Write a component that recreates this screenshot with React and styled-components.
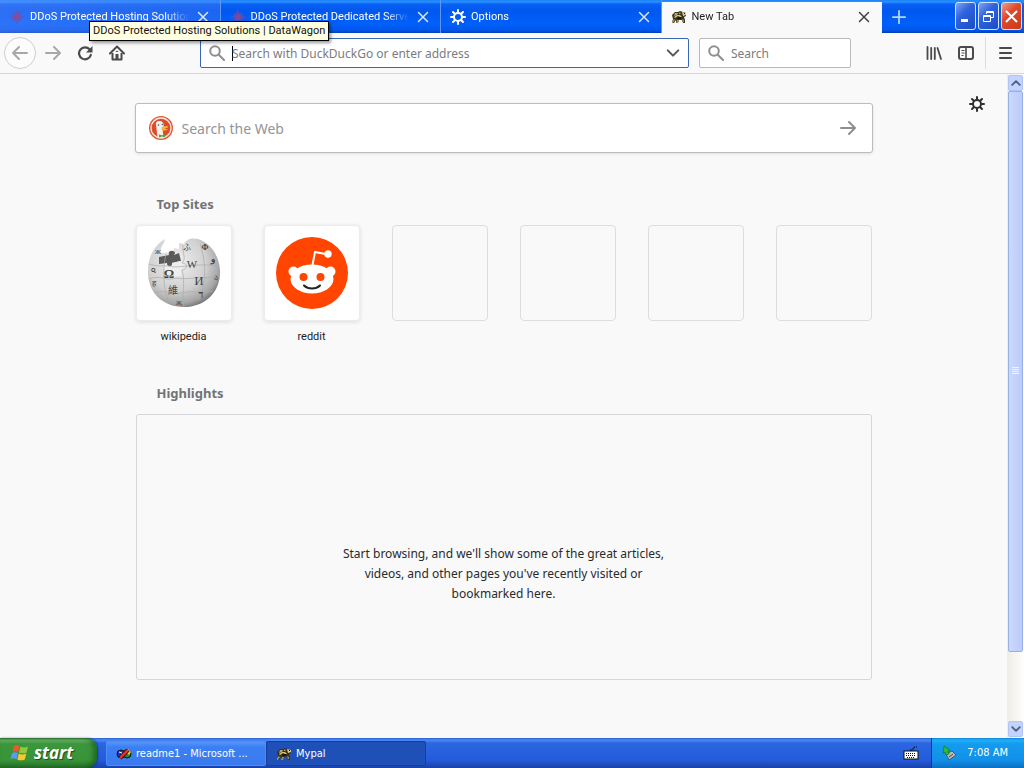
import React from 'react'
import styled, { createGlobalStyle, css } from 'styled-components'

const pageFont = '"Noto Sans", "Open Sans", sans-serif'
const chromeFont = 'Roboto, "Noto Sans", sans-serif'
const taskFont = '"DejaVu Sans Condensed", "Noto Sans", sans-serif'

const GlobalStyle = createGlobalStyle`
  *, *::before, *::after {
    box-sizing: border-box;
  }
  body {
    margin: 0;
    background: #f9f9fa;
    font-family: ${pageFont};
  }
  button, input {
    font: inherit;
    margin: 0;
    padding: 0;
    border: 0;
    background: none;
    color: inherit;
  }
  button {
    cursor: pointer;
  }
  a {
    color: inherit;
    text-decoration: none;
  }
  svg {
    display: block;
    flex: none;
  }
`

/* icons */

const Line = ({ size = 16, width = 2, color = 'currentColor', children }) => (
  <svg width={size} height={size} viewBox="0 0 16 16" fill="none" stroke={color} strokeWidth={width} strokeLinecap="round" strokeLinejoin="round" aria-hidden="true">
    {children}
  </svg>
)

const CloseIcon = () => (
  <Line size={12} width={2}><path d="M2 2l12 12M14 2L2 14" /></Line>
)

const BackIcon = () => <Line width={2}><path d="M15 8H1M7 2L1 8l6 6" /></Line>
const ForwardIcon = () => <Line width={2}><path d="M1 8h14M9 2l6 6-6 6" /></Line>

const ReloadIcon = () => (
  <svg width="16" height="16" viewBox="0 0 16 16" aria-hidden="true">
    <path d="M12.6 4.4A6 6 0 1 0 13.8 10" fill="none" stroke="currentColor" strokeWidth="2.2" strokeLinecap="round" />
    <path d="M15.5 1v6.500H9z" fill="currentColor" />
  </svg>
)

const HomeIcon = () => (
  <svg width="16" height="16" viewBox="0 0 16 16" aria-hidden="true">
    <path d="M1 8.500L8 1.500l7 7" fill="none" stroke="currentColor" strokeWidth="2" strokeLinecap="round" strokeLinejoin="round" />
    <path d="M3.500 8v6.500h9V8" fill="none" stroke="currentColor" strokeWidth="2" strokeLinejoin="round" />
    <path d="M6.500 9h3v6h-3z" fill="currentColor" />
    <path d="M8 5.500l1.500 1.500h-3z" fill="currentColor" />
  </svg>
)

const SearchIcon = () => (
  <Line width={2}><circle cx="6" cy="6" r="4.800" /><path d="M9.800 9.800L15 15" /></Line>
)

const ChevronIcon = () => <Line size={14} width={2.4}><path d="M2 5l6 6 6-6" /></Line>

const PlusIcon = () => <Line size={14} width={2}><path d="M8 1v14M1 8h14" /></Line>

const LibraryIcon = () => (
  <svg width="16" height="16" viewBox="0 0 16 16" fill="none" stroke="currentColor" strokeWidth="1.800" strokeLinecap="round" aria-hidden="true">
    <path d="M1.500 2v12M5.200 3v11M8.800 3v11M11.500 3L15 14" />
  </svg>
)

const SidebarIcon = () => (
  <svg width="16" height="16" viewBox="0 0 16 16" fill="none" stroke="currentColor" aria-hidden="true">
    <rect x="1" y="2" width="14" height="12" rx="2" strokeWidth="2" />
    <path d="M8 2v12" strokeWidth="1.600" />
    <path d="M3.500 5.500h3M3.500 8h3M3.500 10.500h2" />
  </svg>
)

const MenuIcon = () => <Line width={2}><path d="M3 3h11M3 8h11M3 13h11" /></Line>

const GearIcon = () => (
  <svg width="16" height="16" viewBox="0 0 16 16" fill="none" stroke="currentColor" strokeWidth="2" strokeLinecap="round" aria-hidden="true">
    <circle cx="8" cy="8" r="4" />
    <path d="M8 1v2M8 13v2M1 8h2M13 8h2M3 3l1.500 1.500M11.500 11.500L13 13M13 3l-1.500 1.500M4.500 11.500L3 13" />
  </svg>
)

const WagonIcon = () => (
  <svg width="16" height="16" viewBox="0 0 16 16" aria-hidden="true">
    <g fill="#7d4aa8" opacity="0.55">
      <circle cx="8" cy="8" r="5" />
      <path d="M7 1h2v14H7zM1 7h14v2H1z" />
      <path d="M3.500 3.500l9 9M12.500 3.500l-9 9" stroke="#7d4aa8" />
    </g>
    <circle cx="8" cy="8" r="3" fill="#a04878" opacity="0.6" />
  </svg>
)

const MypalIcon = () => (
  <svg width="16" height="16" viewBox="0 0 16 16" aria-hidden="true">
    <path d="M1 6l3-3 3 0 2-1 3 1 3 1v3l-2 1 1 3v3h-2l-1-3-3 0-1 3H5l0-3-2 3H1l1-4z" fill="#3a3422" />
    <path d="M11 3l4 1v2l-3 1z" fill="#d9cda0" />
    <path d="M13 4h1v1h-1z" fill="#111" />
    <path d="M4 4l3 0-1 2-3 1zM8 3.500l2 .5-1 1-1 0z" fill="#b6a668" />
    <path d="M3 8l3-2 3 0 2 2-2 0-2-1-3 2z" fill="#d8c56a" />
    <path d="M1 12l2-2 1 1-2 3H1zM6 11l2 0-1 3H5zM11 10l2 1v2h-1z" fill="#98915c" />
    <path d="M7 8h3v2H6z" fill="#15130e" />
  </svg>
)

const DuckIcon = () => (
  <svg width="24" height="24" viewBox="0 0 24 24" aria-hidden="true">
    <circle cx="12" cy="12" r="12" fill="#de5833" />
    <circle cx="12" cy="12" r="10" fill="#de4a2c" stroke="#f8e8dc" strokeWidth="1.300" />
    <path d="M8.500 21.200L7 9C6.500 6 8 4.800 10.500 5c3 0 4.200 2 4.200 5l-1 4 .8 7.200c-2 .8-4 .8-6 0z" fill="#f3f1e6" />
    <path d="M12.500 11.500c2-1.500 4-1.500 7-1-1 1.500-3 2-4 2.200 1 .5 2.500.5 3.500.8-2 1.500-5.500 1.300-6.500 0z" fill="#fbb72a" />
    <path d="M10 18.500l3 .8 3-1v3l-3-.8-3 1z" fill="#5c9e45" />
    <circle cx="9.500" cy="9" r="0.800" fill="#2d4f8e" />
    <circle cx="13.300" cy="8.500" r="0.700" fill="#2d4f8e" />
  </svg>
)

const WikipediaLogo = () => (
  <svg width="76" height="72" viewBox="0 0 76 72" aria-hidden="true">
    <defs>
      <radialGradient id="globe" cx="0.4" cy="0.35" r="0.68">
        <stop offset="0" stopColor="#f0f0f0" />
        <stop offset="0.6" stopColor="#d0d0d0" />
        <stop offset="0.88" stopColor="#a6a6a6" />
        <stop offset="1" stopColor="#777" />
      </radialGradient>
    </defs>
    <path d="M19 2c-1 5-5 8-4 14l12-1 1-4 5 1 0-6 5 1c3-6 9-6 14-5 13 4 21 17 22 31 1 22-15 37-36 37C15 70 1 54 2 33 2 19 9 8 19 2z" fill="url(#globe)" />
    <path d="M13 20l10-2c-1-3 1-5 4-4s2 2 1 4l5-2 2 8-9 2c2 4-5 6-5 0l-8 1z" fill="#5a5a5a" />
    <path d="M21 26c-2 4 6 5 5 0l8-2 2 2-1 13-16 2-1-13z" fill="#eee" />
    <g fill="none" stroke="#aaa" strokeWidth="0.700">
      <path d="M20 17c-3 13-4 31 3 49M37 8c-1 11 4 12-1 18 7 0 5 7 0 7 4 13-1 25 2 37M54 7c6 17 7 40-2 57" />
      <path d="M3 27c12 4 18 0 24 3 13 0 26-4 45-1M3 42c12-5 17 3 27-1 13 2 25-2 44 0M8 56c10-4 18 2 28 0 11-3 20 1 31-2" />
    </g>
    <g fill="#444" fontFamily="Liberation Serif, Noto Sans CJK SC, serif" textAnchor="middle">
      <text x="23" y="41" fontSize="13" fontWeight="bold">Ω</text>
      <text x="46" y="31" fontSize="11">W</text>
      <text x="53" y="48" fontSize="13">И</text>
      <text x="27" y="57" fontSize="10">維</text>
      <text x="55" y="61" fontSize="10" fontWeight="bold">ד</text>
      <text x="41" y="13" fontSize="8">ふ</text>
      <text x="59" y="13" fontSize="8" fontWeight="bold">Ф</text>
      <text x="67" y="25" fontSize="9" fontWeight="bold">و</text>
      <text x="7" y="36" fontSize="8">વ</text>
      <text x="8" y="49" fontSize="8">ह</text>
      <text x="12" y="17" fontSize="7">Ж</text>
      <text x="70" y="43" fontSize="8">ა</text>
      <text x="33" y="68" fontSize="7">Җ</text>
    </g>
  </svg>
)

const RedditLogo = () => (
  <svg width="72" height="72" viewBox="0 0 72 72" aria-hidden="true">
    <circle cx="36" cy="36" r="36" fill="#ff4500" />
    <path d="M36.500 28L39 15l13 2.500" fill="none" stroke="#fff" strokeWidth="2" strokeLinejoin="round" />
    <circle cx="52" cy="17" r="3.700" fill="#fff" />
    <circle cx="17.500" cy="34.500" r="5" fill="#fff" />
    <circle cx="54.500" cy="34.500" r="5" fill="#fff" />
    <ellipse cx="36" cy="42" rx="21.500" ry="14.500" fill="#fff" />
    <circle cx="27.500" cy="40" r="4" fill="#ff4500" />
    <circle cx="44.500" cy="40" r="4" fill="#ff4500" />
    <path d="M28 48.500c4 4 12 4 16 0" fill="none" stroke="#222" strokeWidth="2" strokeLinecap="round" />
  </svg>
)

const WindowsLogo = () => (
  <svg width="20" height="20" viewBox="0 0 20 20" aria-hidden="true">
    <path d="M4 3c2-1.500 4-1 5.500 0L8 9C6 8 4.500 8 2.500 9z" fill="#ea5a2b" />
    <path d="M10.500 3.500c2 1.300 4.500 1.300 7.500.2L16.500 9.500c-3 1.300-5 1-7.500 0z" fill="#8ecb3c" />
    <path d="M2.200 10c2-1 3.800-1 5.600 0l-1.300 6c-2-1-4-1-6 0z" fill="#5b9cf0" />
    <path d="M8.800 10.500c2.500 1.300 4.700 1.300 7.500 0l-1.500 6c-3 1.300-5 1-7.500 0z" fill="#fbc72e" />
  </svg>
)

const WordpadIcon = () => (
  <svg width="16" height="16" viewBox="0 0 16 16" aria-hidden="true">
    <circle cx="5" cy="8" r="4" fill="#1a37c8" stroke="#111" />
    <circle cx="11" cy="8" r="4" fill="#1c8a3a" stroke="#111" />
    <path d="M9 5l3-2 3 3-2 3z" fill="#f2d22e" />
    <path d="M4 12L12 4" stroke="#111" strokeWidth="4" />
    <path d="M4 12L12 4" stroke="#e8302a" strokeWidth="2.500" />
    <path d="M3 6l3 1" stroke="#fff" />
  </svg>
)

const KeyboardIcon = () => (
  <svg width="16" height="16" viewBox="0 0 16 16" aria-hidden="true">
    <path d="M8 6V4h3V2h3" fill="none" stroke="#111" strokeDasharray="2 1" />
    <rect x="1" y="6" width="14" height="8" fill="#fff" stroke="#111" />
    <path d="M3 8.500h10M3 10.500h10M4 12.500h8" stroke="#111" strokeDasharray="1 1" />
  </svg>
)

const EjectIcon = () => (
  <svg width="16" height="16" viewBox="0 0 16 16" aria-hidden="true">
    <path d="M5 9l6-3 4 4-7 5z" fill="#b9bec4" stroke="#4c5560" />
    <path d="M8 12l4-3" stroke="#444" />
    <path d="M3 1l6 4-2 1 1 3-3 1-1-3-2 1z" fill="#33b83a" stroke="#167a2b" strokeWidth="0.800" />
  </svg>
)

/* title bar */

const Window = styled.div`
  display: flex;
  flex-direction: column;
  min-height: 100vh;
`

const TitleBar = styled.header`
  display: flex;
  height: 33px;
  padding-right: 2px;
  font: 11px/16px ${chromeFont};
  color: #fff;
  background: linear-gradient(#1b86fb 0, #2a90ff 2px, #0a62f4 4px, #0058ee 10px, #0060fa 24px, #0058ec 30px, #003db8 33px);
`

const Tabs = styled.div`
  display: flex;
  flex: 0 1 882px;
  min-width: 0;
`

const Tab = styled.div`
  position: relative;
  display: flex;
  flex: 1 1 0;
  min-width: 0;
  align-items: center;
  gap: 5px;
  padding: 1px 11px 0 9px;
  border-right: 1px solid #5b97f8;

  ${({ $hover }) => $hover && css`
    background: linear-gradient(90deg, rgba(110, 145, 250, 0.4), rgba(90, 130, 245, 0.3));
  `}

  ${({ $active }) => $active && css`
    margin-top: 2px;
    padding-top: 0;
    padding-bottom: 1px;
    border-right-color: #f9f9fa;
    background: #f9f9fa;
    color: #222;
  `}
`

const TabTitle = styled.button`
  flex: 1;
  min-width: 0;
  overflow: hidden;
  white-space: nowrap;
  text-align: left;
  mask-image: linear-gradient(90deg, #000 calc(100% - 24px), transparent);
`

const TabClose = styled.button`
  display: flex;
  margin-left: 3px;
  opacity: 0.85;
`

const Tooltip = styled.div`
  position: absolute;
  z-index: 2;
  top: 21px;
  left: 89px;
  padding: 1px 3px;
  border: 1px solid #000;
  background: #ffffe1;
  box-shadow: 2px 2px 3px rgba(0, 0, 0, 0.4);
  color: #111;
  white-space: nowrap;
`

const NewTab = styled.button`
  display: flex;
  align-items: center;
  padding: 0 10px;
  color: #b5d8ff;
`

const WindowButtons = styled.div`
  display: flex;
  gap: 2px;
  margin-left: auto;
  padding: 2px 0 3px;
`

const WindowButton = styled.button`
  display: flex;
  align-items: center;
  justify-content: center;
  width: 21px;
  border: 1px solid #d5e3ff;
  border-radius: 3px;
  background: ${({ $close }) => ($close
    ? 'linear-gradient(135deg, #f0a088, #e0492a 40%, #c93a18)'
    : 'linear-gradient(135deg, #7fa5f4, #2f62dc 40%, #1c4cc4)')};
`

/* navigation bar */

const NavBar = styled.nav`
  display: flex;
  align-items: center;
  height: 41px;
  padding: 0 3px 0 4px;
  border-bottom: 1px solid #d4d8dc;
  background: #f9f9fa;
  color: #4a4a4c;
`

const NavButton = styled.button`
  display: flex;
  flex: none;
  align-items: center;
  justify-content: center;
  width: 32px;
  height: 32px;
  color: ${({ disabled }) => (disabled ? '#a8a8aa' : 'inherit')};

  ${({ $round }) => $round && css`
    margin-right: 1px;
    border: 1px solid #cfcfd1;
    border-radius: 50%;
    background: #fcfcfc;
  `}
`

const Spring = styled.div`
  flex: 1 1 67px;
`

const Field = styled.label`
  display: flex;
  flex: 1 1 ${({ $width }) => $width}px;
  align-items: center;
  gap: 7px;
  min-width: 0;
  height: 30px;
  padding: 0 8px;
  border: 1px solid ${({ $focused }) => ($focused ? '#3a66b4' : '#b9b9bb')};
  border-radius: 2px;
  background: #fff;
  color: #8f8f91;
`

const FieldInput = styled.input`
  flex: 1;
  min-width: 0;
  height: 20px;
  outline: 0;
  font-size: ${({ $large }) => ($large ? '14px' : '12px')};

  &::placeholder {
    color: ${({ $large }) => ($large ? '#949496' : '#7c7c7e')};
    opacity: 1;
  }
`

const Caret = styled.span`
  width: 1px;
  height: 15px;
  margin-right: -8px;
  background: #000;
`

const DropButton = styled.button`
  display: flex;
  color: #58585a;
`

const SearchGap = styled.div`
  width: 10px;
`

const Divider = styled.div`
  width: 1px;
  height: 32px;
  margin: 0 3px;
  background: #dcdcde;
`

/* new tab page */

const Viewport = styled.div`
  display: flex;
  flex: 1;
`

const Page = styled.main`
  display: grid;
  flex: 1;
  grid-template-columns: 1fr minmax(0, 738px) 1fr;
  align-content: start;
  padding-top: 22px;
  background: #f9f9fa;
`

const Settings = styled.button`
  display: flex;
  grid-column: 3;
  align-self: start;
  justify-self: end;
  margin-right: 22px;
  color: #2f2f31;
`

const Content = styled.div`
  grid-column: 2;
  grid-row: 1;
  padding-top: 7px;
`

const WebSearch = styled.form`
  display: flex;
  align-items: center;
  gap: 9px;
  height: 50px;
  padding: 0 16px 0 13px;
  border: 1px solid #bcbcbe;
  border-radius: 3px;
  background: #fff;
  box-shadow: 0 1px 3px rgba(0, 0, 0, 0.1);
`

const SubmitButton = styled.button`
  display: flex;
  color: #8f8f91;
`

const Section = styled.section`
  padding: 0 1px;
`

const SectionTitle = styled.h2`
  margin: ${({ $top }) => $top}px 0 11px 21px;
  font-size: 13px;
  line-height: 20px;
  font-weight: 700;
  color: #737375;
`

const SiteList = styled.ul`
  display: flex;
  justify-content: space-between;
  margin: 0;
  padding: 0;
  list-style: none;
`

const SiteLink = styled.a`
  display: block;
  width: 96px;
  text-align: center;
  font: 11px/16px ${chromeFont};
  color: #222;
`

const Tile = styled.span`
  display: flex;
  align-items: center;
  justify-content: center;
  width: 96px;
  height: 96px;
  margin-bottom: 8px;
  border: 1px solid ${({ $empty }) => ($empty ? '#dededf' : '#ececed')};
  border-radius: 4px;
  background: ${({ $empty }) => ($empty ? 'transparent' : '#fff')};
  box-shadow: ${({ $empty }) => ($empty ? 'none' : '0 1px 4px rgba(12, 12, 13, 0.12)')};
`

const Highlights = styled.div`
  padding: 129px 16px 75px;
  border: 1px solid #d7d7db;
  border-radius: 3px;
`

const Message = styled.p`
  max-width: 344px;
  margin: 0 auto;
  font-size: 12px;
  line-height: 20px;
  text-align: center;
  color: #2a2a2c;
`

/* scroll bar */

const ScrollBar = styled.div`
  display: flex;
  flex-direction: column;
  width: 17px;
  padding: 1px;
  background: linear-gradient(90deg, #eeede5, #fefefb);
`

const ScrollButton = styled.button`
  display: flex;
  align-items: center;
  justify-content: center;
  width: 15px;
  height: 16px;
  border: 1px solid #b0c4f5;
  border-radius: 2px;
  background: #c3d3fd;
  color: #4d6185;
`

const Track = styled.div`
  display: flex;
  flex: 1;
  flex-direction: column;
`

const Thumb = styled.div`
  display: flex;
  flex: 0 0 89%;
  align-items: center;
  justify-content: center;
  border: 1px solid #98b0e8;
  border-radius: 2px;
  background: linear-gradient(90deg, #cbd9fe, #bccbf9);
`

/* task bar */

const TaskBar = styled.footer`
  display: flex;
  height: 30px;
  font: 11px/16px ${taskFont};
  color: #fff;
  background: linear-gradient(#2a5fd0 0, #4a8af5 2px, #2c66e0 5px, #245bdc 22px, #1941a5 30px);
`

const StartButton = styled.button`
  display: flex;
  align-items: center;
  gap: 4px;
  width: 97px;
  margin-right: 9px;
  padding: 0 0 1px 10px;
  border-radius: 0 10px 10px 0;
  background: linear-gradient(#2f7d30 0, #69b168 2px, #3c963c 6px, #389438 22px, #266f28 30px);
  box-shadow: inset -4px 0 5px rgba(10, 70, 20, 0.5), 1px 0 2px rgba(10, 30, 120, 0.6);
  font: italic bold 17px/24px "Open Sans", "Noto Sans", sans-serif;
  text-shadow: 1px 1px 1px rgba(0, 0, 0, 0.5);
`

const Task = styled.button`
  display: flex;
  flex: 0 1 160px;
  align-items: center;
  gap: 4px;
  min-width: 0;
  margin: 3px 0 2px;
  padding: 0 16px 0 9px;
  border: 1px solid ${({ $active }) => ($active ? '#173f98' : '#4e8df8')};
  border-radius: 2px;
  background: ${({ $active }) => ($active ? '#1e50b8' : 'linear-gradient(#5795fb, #3c7ff2 5px, #397bee)')};

  span {
    overflow: hidden;
    text-overflow: ellipsis;
    white-space: nowrap;
  }
`

const Language = styled.button`
  display: flex;
  align-items: center;
  margin-left: auto;
  padding: 0 12px;
`

const Tray = styled.div`
  display: flex;
  align-items: center;
  gap: 10px;
  padding: 0 16px 0 9px;
  border-left: 1px solid #0b3b95;
  background: linear-gradient(#1081d8 0, #1fb0f8 2px, #149bee 6px, #1290e8 22px, #0c6fc4 30px);
`

const tabs = [
  { title: 'DDoS Protected Hosting Solutions', tooltip: 'DDoS Protected Hosting Solutions | DataWagon', icon: <WagonIcon /> },
  { title: 'DDoS Protected Dedicated Servers', icon: <WagonIcon /> },
  { title: 'Options', icon: <GearIcon /> },
  { title: 'New Tab', icon: <MypalIcon />, active: true },
]

const sites = [
  { name: 'wikipedia', logo: <WikipediaLogo /> },
  { name: 'reddit', logo: <RedditLogo /> },
]

const emptySlots = [1, 2, 3, 4]

const App = () => {
  return (
    <Window>
      <GlobalStyle />
      <TitleBar>
        <Tabs>
          {tabs.map((tab) => (
            <Tab key={tab.title} $hover={Boolean(tab.tooltip)} $active={tab.active}>
              {tab.icon}
              <TabTitle>{tab.title}</TabTitle>
              <TabClose aria-label="Close tab"><CloseIcon /></TabClose>
              {tab.tooltip && <Tooltip role="tooltip">{tab.tooltip}</Tooltip>}
            </Tab>
          ))}
        </Tabs>
        <NewTab aria-label="Open a new tab"><PlusIcon /></NewTab>
        <WindowButtons>
          <WindowButton aria-label="Minimize">
            <svg width="15" height="15" viewBox="0 0 15 15"><path d="M3 10h7v3H3z" fill="#fff" /></svg>
          </WindowButton>
          <WindowButton aria-label="Restore">
            <svg width="15" height="15" viewBox="0 0 15 15" fill="none" stroke="#fff">
              <path d="M5.500 5V2.500h7v6H10M5 3.500h8M2.500 6.500h7v6h-7zM2 7.500h8" />
            </svg>
          </WindowButton>
          <WindowButton $close aria-label="Close">
            <svg width="15" height="15" viewBox="0 0 15 15" stroke="#fff" strokeWidth="2"><path d="M2 2l11 11M13 2L2 13" /></svg>
          </WindowButton>
        </WindowButtons>
      </TitleBar>

      <NavBar>
        <NavButton $round disabled aria-label="Back"><BackIcon /></NavButton>
        <NavButton disabled aria-label="Forward"><ForwardIcon /></NavButton>
        <NavButton aria-label="Reload"><ReloadIcon /></NavButton>
        <NavButton aria-label="Home"><HomeIcon /></NavButton>
        <Spring />
        <Field $width={489} $focused>
          <SearchIcon />
          <Caret />
          <FieldInput type="text" aria-label="Address" placeholder="Search with DuckDuckGo or enter address" />
          <DropButton aria-label="Show history"><ChevronIcon /></DropButton>
        </Field>
        <SearchGap />
        <Field $width={152}>
          <SearchIcon />
          <FieldInput type="text" aria-label="Search" placeholder="Search" />
        </Field>
        <Spring />
        <NavButton aria-label="Library"><LibraryIcon /></NavButton>
        <NavButton aria-label="Sidebars"><SidebarIcon /></NavButton>
        <Divider />
        <NavButton aria-label="Open menu"><MenuIcon /></NavButton>
      </NavBar>

      <Viewport>
        <Page>
          <Settings aria-label="Customize page"><GearIcon /></Settings>
          <Content>
            <WebSearch onSubmit={(e) => e.preventDefault()}>
              <DuckIcon />
              <FieldInput $large type="text" aria-label="Search the Web" placeholder="Search the Web" />
              <SubmitButton aria-label="Submit"><ForwardIcon /></SubmitButton>
            </WebSearch>
            <Section>
              <SectionTitle $top={41}>Top Sites</SectionTitle>
              <SiteList>
                {sites.map((site) => (
                  <li key={site.name}>
                    <SiteLink href="#">
                      <Tile>{site.logo}</Tile>
                      {site.name}
                    </SiteLink>
                  </li>
                ))}
                {emptySlots.map((slot) => (
                  <li key={slot}><Tile $empty /></li>
                ))}
              </SiteList>
            </Section>
            <Section>
              <SectionTitle $top={38}>Highlights</SectionTitle>
              <Highlights>
                <Message>
                  Start browsing, and we'll show some of the great articles, videos, and other pages you've recently visited or bookmarked here.
                </Message>
              </Highlights>
            </Section>
          </Content>
        </Page>
        <ScrollBar>
          <ScrollButton aria-label="Scroll up"><Line size={10} width={3}><path d="M2 11l6-6 6 6" /></Line></ScrollButton>
          <Track>
            <Thumb>
              <svg width="7" height="8" viewBox="0 0 7 8"><path d="M0 .5h7M0 2.500h7M0 4.500h7M0 6.500h7" stroke="#eef4fe" /></svg>
            </Thumb>
          </Track>
          <ScrollButton aria-label="Scroll down"><Line size={10} width={3}><path d="M2 5l6 6 6-6" /></Line></ScrollButton>
        </ScrollBar>
      </Viewport>

      <TaskBar>
        <StartButton><WindowsLogo />start</StartButton>
        <Task><WordpadIcon /><span>readme1 - Microsoft ...</span></Task>
        <Task $active><MypalIcon /><span>Mypal</span></Task>
        <Language aria-label="Keyboard layout"><KeyboardIcon /></Language>
        <Tray>
          <EjectIcon />
          <time>7:08 AM</time>
        </Tray>
      </TaskBar>
    </Window>
  )
}

export default App
